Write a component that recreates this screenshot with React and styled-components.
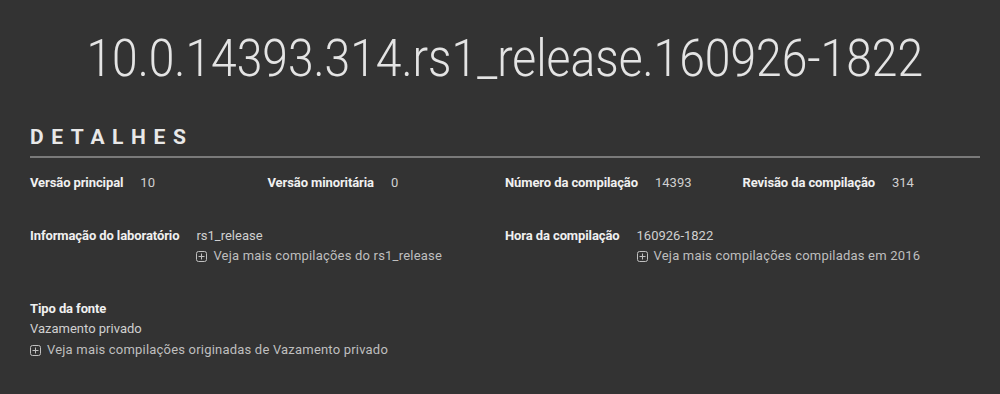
import React from "react";
import styled, { createGlobalStyle } from "styled-components";

const GlobalStyle = createGlobalStyle`
  html, body {
    margin: 0;
    padding: 0;
    background: #333333;
  }
  body {
    font-family: Roboto, "Noto Sans", sans-serif;
    color: #e6e6e6;
  }
`;

const Page = styled.div`
  width: 1000px;
  height: 394px;
  box-sizing: border-box;
  padding: 0 20px 0 30px;
  background: #333333;
  overflow: hidden;
`;

const Title = styled.h1`
  margin: 0;
  padding-top: 31px;
  text-align: center;
  font-weight: 300;
  font-size: 51px;
  line-height: 56px;
  color: #e4e4e4;
  span {
    display: inline-block;
    transform: scaleX(0.906);
  }
`;

const SectionHead = styled.h2`
  margin: 36px 0 0;
  padding-bottom: 5px;
  font-size: 21px;
  font-weight: 700;
  letter-spacing: 7.6px;
  line-height: 28px;
  color: #e8e8e8;
  border-bottom: 2px solid #7a7a7a;
`;

const Grid = styled.div`
  display: grid;
  grid-template-columns: repeat(4, 1fr);
  row-gap: 33px;
  padding-top: 15px;
`;

const Field = styled.div`
  grid-column: span ${(p) => p.span || 1};
  display: ${(p) => (p.stacked ? "block" : "flex")};
  align-items: flex-start;
  gap: 17px;
  font-size: 13px;
  line-height: 20px;
`;

const Label = styled.div`
  font-weight: 700;
  color: #f0f0f0;
  white-space: nowrap;
  letter-spacing: -0.1px;
`;

const Value = styled.div`
  color: #d0d0d0;
  white-space: nowrap;
`;

const More = styled.a`
  display: flex;
  align-items: center;
  gap: 6px;
  color: #bfbfbf;
  text-decoration: none;
  white-space: nowrap;
  letter-spacing: 0.2px;
  line-height: ${(p) => (p.tall ? "22px" : "20px")};
  svg {
    flex: none;
  }
`;

const PlusBox = () => (
  <svg width="11" height="11" viewBox="0 0 11 11">
    <rect x="0.5" y="0.5" width="10" height="10" rx="2" fill="none" stroke="#c0c0c0" strokeWidth="1" />
    <path d="M5.5 2.5v6M2.5 5.5h6" stroke="#c0c0c0" strokeWidth="1" />
  </svg>
);

const MoreLink = ({ children, tall }) => (
  <More href="#" tall={tall}>
    <PlusBox />
    {children}
  </More>
);

export default function App() {
  return (
    <>
      <GlobalStyle />
      <Page>
        <Title>
          <span>10.0.14393.314.rs1_release.160926-1822</span>
        </Title>
        <SectionHead>DETALHES</SectionHead>
        <Grid>
          <Field>
            <Label>Versão principal</Label>
            <Value>10</Value>
          </Field>
          <Field>
            <Label>Versão minoritária</Label>
            <Value>0</Value>
          </Field>
          <Field>
            <Label>Número da compilação</Label>
            <Value>14393</Value>
          </Field>
          <Field>
            <Label>Revisão da compilação</Label>
            <Value>314</Value>
          </Field>

          <Field span={2}>
            <Label>Informação do laboratório</Label>
            <div>
              <Value>rs1_release</Value>
              <MoreLink>Veja mais compilações do rs1_release</MoreLink>
            </div>
          </Field>
          <Field span={2}>
            <Label>Hora da compilação</Label>
            <div>
              <Value>160926-1822</Value>
              <MoreLink>Veja mais compilações compiladas em 2016</MoreLink>
            </div>
          </Field>

          <Field span={4} stacked>
            <Label>Tipo da fonte</Label>
            <Value>Vazamento privado</Value>
            <MoreLink tall>Veja mais compilações originadas de Vazamento privado</MoreLink>
          </Field>
        </Grid>
      </Page>
    </>
  );
}
